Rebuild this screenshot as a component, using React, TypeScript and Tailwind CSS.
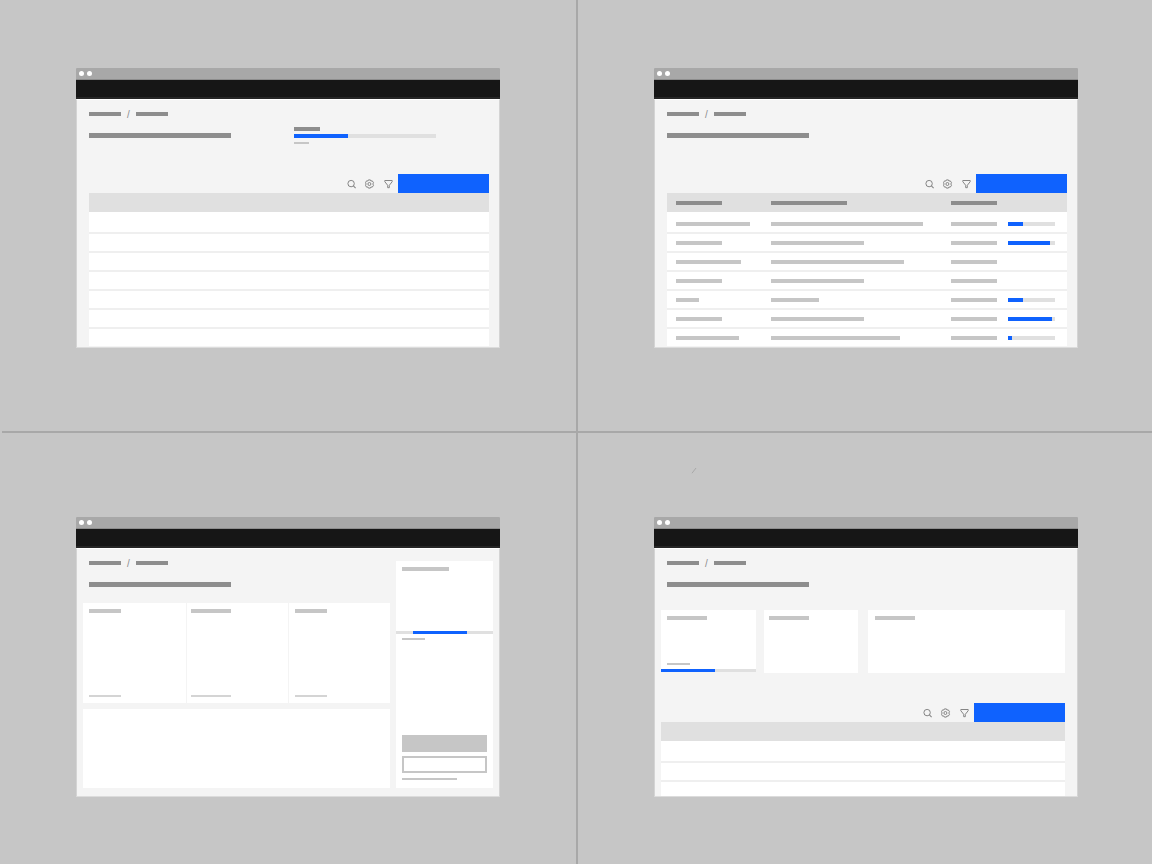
import type { ReactNode } from "react";
import clsx from "clsx";

type Row = { name: string; detail: string; progress?: number };

const rows: Row[] = [
  { name: "w-[74px]", detail: "w-[152px]", progress: 15 },
  { name: "w-[46px]", detail: "w-[93px]", progress: 42 },
  { name: "w-[65px]", detail: "w-[133px]" },
  { name: "w-[46px]", detail: "w-[93px]" },
  { name: "w-[23px]", detail: "w-[48px]", progress: 15 },
  { name: "w-[46px]", detail: "w-[93px]", progress: 44 },
  { name: "w-[63px]", detail: "w-[129px]", progress: 4 },
];

// Placeholder for a line of text
function Bar({ className }: { className: string }) {
  return <span className={clsx("block shrink-0", className)} />;
}

function Progress({
  value,
  offset = 0,
  className,
}: {
  value: number;
  offset?: number;
  className: string;
}) {
  return (
    <div role="progressbar" aria-label="Progress" className={clsx("bg-[#e0e0e0]", className)}>
      <div className="h-full bg-[#0f62fe]" style={{ width: value, marginLeft: offset }} />
    </div>
  );
}

function SearchIcon() {
  return (
    <svg viewBox="0 0 10 10" className="size-[10px]" fill="none" stroke="currentColor">
      <circle cx="5.1" cy="4.6" r="3.2" />
      <path d="M7.4 6.900l2.200 2.200" strokeWidth="1.100" />
    </svg>
  );
}

function SettingsIcon() {
  return (
    <svg viewBox="0 0 10 10" className="size-[10px]" fill="none" stroke="currentColor">
      <path d="M3.400 .9h2l.5 1.100 1.400-.1 1.200 1.800-.7 1.300.7 1.300-1.200 1.800-1.400-.1-.5 1.100h-2l-.5-1.100-1.400.1L.5 6.300 1.100 5 .5 3.700l1-1.800 1.400.1z" />
      <circle cx="4.400" cy="5" r="1.500" />
    </svg>
  );
}

function FilterIcon() {
  return (
    <svg viewBox="0 0 10 10" className="size-[10px]" fill="none" stroke="currentColor">
      <path d="M.8 1.500h7.400v1.200L5.300 6.300v2.400H3.700V6.300L.8 2.700z" />
    </svg>
  );
}

function Toolbar() {
  return (
    <div className="flex h-[19px] items-center justify-end">
      <div className="mr-1 flex gap-[9px] text-[#858585]">
        <button type="button" aria-label="Search">
          <SearchIcon />
        </button>
        <button type="button" aria-label="Settings">
          <SettingsIcon />
        </button>
        <button type="button" aria-label="Filter">
          <FilterIcon />
        </button>
      </div>
      <button type="button" aria-label="Create" className="h-full w-[91px] bg-[#0f62fe]" />
    </div>
  );
}

function Heading({ className, children }: { className?: string; children?: ReactNode }) {
  return (
    <header className={clsx("flex justify-between", className)}>
      <div>
        <nav aria-label="Breadcrumb" className="flex h-1 items-center">
          <Bar className="h-1 w-8 bg-[#8d8d8d]" />
          <span className="w-[15px] text-center font-['Liberation_Sans',sans-serif] text-[10px] text-[#8d8d8d]">
            /
          </span>
          <Bar className="h-1 w-8 bg-[#8d8d8d]" />
        </nav>
        <Bar className="mt-[17px] h-[5px] w-[142px] bg-[#8d8d8d]" />
      </div>
      {children}
    </header>
  );
}

function EmptyRows({ count, last }: { count: number; last: string }) {
  return (
    <>
      <div className="h-[19px] bg-[#e0e0e0]" />
      {Array.from({ length: count }, (_, i) => (
        <div
          key={i}
          className={clsx(
            "bg-white",
            i === 0 && "h-[22px]",
            i > 0 && i < count - 1 && "h-[19px]",
            i === count - 1 ? last : "border-b-2 border-[#efefef]"
          )}
        />
      ))}
    </>
  );
}

function DataTable() {
  return (
    <table className="w-full table-fixed border-separate border-spacing-0">
      <colgroup>
        <col />
        <col className="w-[180px]" />
        <col className="w-[57px]" />
        <col className="w-[59px]" />
      </colgroup>
      <thead>
        <tr className="bg-[#e0e0e0]">
          <th className="h-[19px] p-0 pl-[9px]">
            <Bar className="h-1 w-[46px] bg-[#8d8d8d]" />
          </th>
          <th className="p-0">
            <Bar className="h-1 w-[76px] bg-[#8d8d8d]" />
          </th>
          <th className="p-0">
            <Bar className="h-1 w-[46px] bg-[#8d8d8d]" />
          </th>
          <th className="p-0" />
        </tr>
      </thead>
      <tbody>
        {rows.map((row, i) => {
          const cell = clsx(
            "p-0",
            i === 0 && "h-[22px] pt-[3px]",
            i > 0 && i < rows.length - 1 && "h-[19px]",
            i === rows.length - 1 ? "h-[17px]" : "border-b-2 border-[#efefef]"
          );
          return (
            <tr key={i} className="bg-white">
              <td className={clsx(cell, "pl-[9px]")}>
                <Bar className={clsx("h-1 bg-[#c6c6c6]", row.name)} />
              </td>
              <td className={cell}>
                <Bar className={clsx("h-1 bg-[#c6c6c6]", row.detail)} />
              </td>
              <td className={cell}>
                <Bar className="h-1 w-[46px] bg-[#c6c6c6]" />
              </td>
              <td className={cell}>
                {row.progress && <Progress value={row.progress} className="h-1 w-[47px]" />}
              </td>
            </tr>
          );
        })}
      </tbody>
    </table>
  );
}

function Window({ className, children }: { className: string; children: ReactNode }) {
  return (
    <section className="flex w-full flex-col">
      <div className="flex h-3 items-center gap-[3px] rounded-t-[1px] border-b border-[#8d8d8d] bg-[#a8a8a8] pl-[3px]">
        <span className="size-[5px] rounded-full bg-white" />
        <span className="size-[5px] rounded-full bg-white" />
      </div>
      <div className="h-[19px] border-b-2 border-[#262626] bg-[#161616]" />
      <div
        className={clsx(
          "border border-x-[#d4d4d4] border-t-white border-b-[#dcdcdc] bg-[#f4f4f4] pt-3",
          className
        )}
      >
        {children}
      </div>
    </section>
  );
}

function TablePage() {
  return (
    <Window className="pr-[10px] pb-px pl-3">
      <Heading className="h-[62px]">
        <div className="mt-[15px] mr-[53px] w-[142px]">
          <Bar className="h-1 w-[26px] bg-[#8d8d8d]" />
          <Progress value={54} className="mt-[3px] h-1" />
          <Bar className="mt-1 h-0.5 w-[15px] bg-[#c6c6c6]" />
        </div>
      </Heading>
      <Toolbar />
      <EmptyRows count={7} last="h-[17px]" />
    </Window>
  );
}

function DataPage() {
  return (
    <Window className="pr-[10px] pb-px pl-3">
      <Heading className="h-[62px]" />
      <Toolbar />
      <DataTable />
    </Window>
  );
}

function Card({ className, bar }: { className: string; bar: string }) {
  return (
    <div className={clsx("flex flex-col justify-between bg-white py-[6px]", className)}>
      <Bar className={clsx("h-1 bg-[#c6c6c6]", bar)} />
      <Bar className={clsx("h-0.5 bg-[#d4d4d4]", bar)} />
    </div>
  );
}

function SidePanelPage() {
  return (
    <Window className="flex gap-[6px] px-[6px] pb-2">
      <div className="flex-1">
        <Heading className="h-[42px] pl-[6px]" />
        <div className="grid h-[100px] grid-cols-[103px_1fr_1fr] gap-px">
          <Card className="pl-[6px]" bar="w-8" />
          <Card className="pl-1" bar="w-10" />
          <Card className="pl-[6px]" bar="w-8" />
        </div>
        <div className="mt-[6px] h-[79px] bg-white" />
      </div>
      <aside className="flex w-[97px] flex-col bg-white">
        <Bar className="mt-[6px] ml-[6px] h-1 w-[47px] bg-[#c6c6c6]" />
        <Progress value={54} offset={17} className="mt-[60px] h-[3px]" />
        <Bar className="mt-1 ml-[6px] h-0.5 w-[23px] bg-[#c6c6c6]" />
        <div className="mt-auto flex flex-col gap-1 px-[6px] pb-2">
          <button type="button" aria-label="Primary action" className="h-[17px] bg-[#c6c6c6]" />
          <button
            type="button"
            aria-label="Secondary action"
            className="h-[17px] border-2 border-[#c6c6c6]"
          />
          <Bar className="mt-px h-0.5 w-[55px] bg-[#c6c6c6]" />
        </div>
      </aside>
    </Window>
  );
}

function CardsPage() {
  return (
    <Window className="pr-3 pl-[6px]">
      <Heading className="h-[49px] pl-[6px]" />
      <div className="flex h-[63px]">
        <div className="flex w-[95px] flex-col bg-white pt-[6px]">
          <Bar className="ml-[6px] h-1 w-10 bg-[#c6c6c6]" />
          <Bar className="mt-auto mb-1 ml-[6px] h-0.5 w-[23px] bg-[#c6c6c6]" />
          <Progress value={54} className="h-[3px]" />
          <div className="h-px bg-[#f4f4f4]" />
        </div>
        <div className="ml-2 w-[94px] bg-white pt-[6px] pl-[5px]">
          <Bar className="h-1 w-10 bg-[#c6c6c6]" />
        </div>
        <div className="ml-[10px] flex-1 bg-white pt-[6px] pl-[7px]">
          <Bar className="h-1 w-10 bg-[#c6c6c6]" />
        </div>
      </div>
      <div className="mt-[30px]">
        <Toolbar />
      </div>
      <EmptyRows count={3} last="h-[14px]" />
    </Window>
  );
}

export default function App() {
  return (
    <main className="flex min-h-screen flex-col bg-[#c6c6c6]">
      <div className="grid grid-cols-2">
        <div className="px-[76px] pt-[68px] pb-[83px]">
          <TablePage />
        </div>
        <div className="border-l-2 border-[#a8a8a8] pt-[68px] pr-[74px] pb-[83px] pl-[76px]">
          <DataPage />
        </div>
      </div>
      <div className="flex h-0.5">
        <div className="ml-0.5 flex-1 bg-[#a8a8a8]" />
      </div>
      <div className="grid flex-1 grid-cols-2">
        <div className="px-[76px] pt-[84px]">
          <SidePanelPage />
        </div>
        <div className="relative border-l-2 border-[#a8a8a8] pt-[84px] pr-[74px] pl-[76px]">
          <svg
            viewBox="0 0 6 7"
            className="absolute top-[34px] left-[113px] h-[7px] w-[6px]"
            stroke="#a8a8a8"
          >
            <path d="M1 6.200L5 1" />
          </svg>
          <CardsPage />
        </div>
      </div>
    </main>
  );
}
